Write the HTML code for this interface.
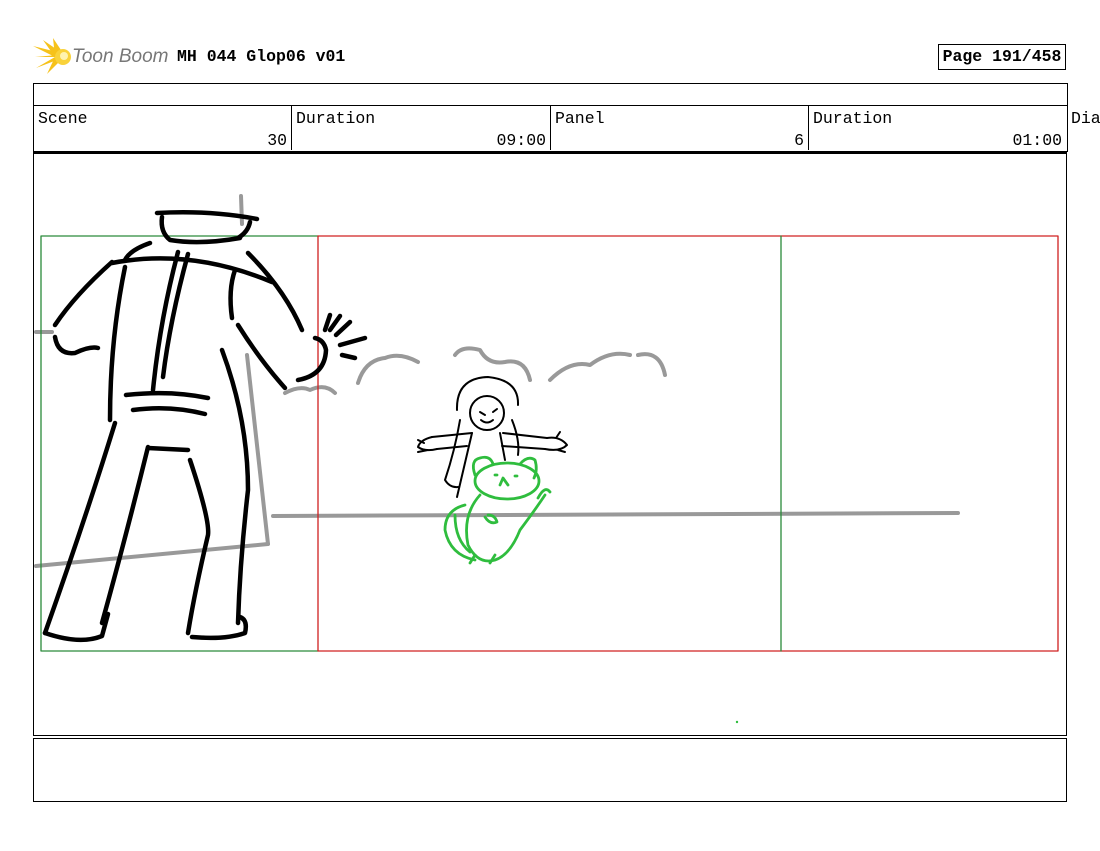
<!DOCTYPE html>
<html><head><meta charset="utf-8"><style>
body{margin:0;background:#fff;width:1100px;height:851px;overflow:hidden;position:relative;font-family:"Liberation Mono",monospace;}
.a{position:absolute;}
.t{font-size:16.5px;color:#000;line-height:18px;}
</style></head><body>
<svg class="a" style="left:33px;top:38px" width="40" height="38" viewBox="0 0 40 38">
<g fill="#f6c21a">
<polygon points="22,19 0,8 24,14"/><polygon points="22,19 2,19 24,17"/><polygon points="22,19 3,30 24,22"/>
<polygon points="22,19 10,2 26,13"/><polygon points="22,19 14,36 26,24"/><polygon points="22,19 20,0 28,12"/>
</g><circle cx="30" cy="19" r="8" fill="#f9d23a"/><circle cx="31" cy="18" r="4" fill="#fff3b0"/>
</svg>
<div class="a" style="left:72px;top:46px;font-family:'Liberation Sans',sans-serif;font-style:italic;font-size:19px;color:#777;">Toon Boom</div>
<div class="a t" style="left:177px;top:48px;font-weight:bold;">MH 044 Glop06 v01</div>
<div class="a t" style="left:938px;top:44px;width:126px;height:24px;border:1px solid #000;font-weight:bold;line-height:24px;text-align:center;">Page 191/458</div>

<div class="a" style="left:33px;top:83px;width:1033px;height:67px;border:1px solid #000;"></div>
<div class="a" style="left:33px;top:105px;width:1034px;border-top:1px solid #000;"></div>
<div class="a" style="left:291px;top:105px;height:45px;border-left:1px solid #000;"></div>
<div class="a" style="left:550px;top:105px;height:45px;border-left:1px solid #000;"></div>
<div class="a" style="left:808px;top:105px;height:45px;border-left:1px solid #000;"></div>
<div class="a t" style="left:38px;top:110px;">Scene</div>
<div class="a t" style="left:296px;top:110px;">Duration</div>
<div class="a t" style="left:555px;top:110px;">Panel</div>
<div class="a t" style="left:813px;top:110px;">Duration</div>
<div class="a t" style="left:1071px;top:110px;">Dia</div>
<div class="a t" style="left:200px;top:132px;width:87px;text-align:right;">30</div>
<div class="a t" style="left:400px;top:132px;width:146px;text-align:right;">09:00</div>
<div class="a t" style="left:700px;top:132px;width:104px;text-align:right;">6</div>
<div class="a t" style="left:900px;top:132px;width:162px;text-align:right;">01:00</div>

<div class="a" style="left:33px;top:152px;width:1032px;height:581px;border:1px solid #000;border-top-width:2px;"></div>
<div class="a" style="left:33px;top:738px;width:1032px;height:62px;border:1px solid #000;"></div>

<svg class="a" style="left:0;top:0" width="1100" height="851" viewBox="0 0 1100 851" fill="none" stroke-linecap="round" stroke-linejoin="round">
<g stroke="#999" stroke-width="4">
<path d="M36 332 L52 332"/><path d="M36 566 L268 544"/><path d="M247 355 L268 544"/><path d="M241 196 L242 224"/>
<path d="M273 516 L958 513"/>
<path d="M358 383 Q365 360 385 358 Q400 352 418 362"/><path d="M455 355 Q462 345 480 350 Q488 365 505 362 Q525 358 530 380"/>
<path d="M550 380 Q570 360 590 365 Q610 350 630 355"/><path d="M638 355 Q660 350 665 375"/>
<path d="M285 393 Q300 385 310 390 Q325 383 335 393"/>
</g>
<g stroke-width="1.3">
<path d="M41 236 H318 M41 236 V651 H318" stroke="#2a8a3a"/>
<path d="M318 236 H1058 V651 H318 Z" stroke="#d02020"/>
<path d="M781 236 V651" stroke="#2a8a3a"/>
</g>
<g stroke="#000" stroke-width="4.5">
<path d="M157 213 Q210 210 257 219"/><path d="M162 217 Q160 232 170 240 Q200 245 240 238"/><path d="M238 238 Q248 232 250 222"/>
<path d="M112 263 Q190 248 272 282"/>
<path d="M112 262 Q75 295 55 325"/><path d="M55 337 Q58 355 75 353 Q90 346 98 348"/>
<path d="M125 267 Q110 340 110 420"/><path d="M150 243 Q130 250 125 260"/>
<path d="M178 252 Q160 320 153 390"/><path d="M188 254 Q170 320 163 377"/>
<path d="M235 270 Q228 290 232 318"/><path d="M248 253 Q285 290 302 330"/>
<path d="M238 325 Q260 360 285 388"/>
<path d="M298 380 Q325 375 326 350 Q324 340 315 338"/>
<path d="M325 330 L330 315 M330 330 L340 316 M336 335 L350 322 M340 345 L365 338 M342 355 L355 358"/>
<path d="M126 395 Q170 390 208 398"/><path d="M133 410 Q170 405 205 414"/>
<path d="M115 423 Q85 520 45 633"/><path d="M45 633 Q80 645 102 636 L108 614"/>
<path d="M148 447 Q125 540 102 623"/><path d="M148 448 L188 450"/>
<path d="M190 460 Q210 520 208 535 Q195 590 188 633"/>
<path d="M222 350 Q248 420 248 490 Q240 560 238 623"/><path d="M192 637 Q225 640 245 633 Q248 620 240 617"/>
</g>
<g stroke="#000" stroke-width="2">
<circle cx="487" cy="413" r="17"/>
<path d="M457 410 Q456 378 488 377 Q519 380 518 405"/>
<path d="M460 420 Q455 450 445 480 Q450 488 458 487"/><path d="M512 420 Q520 440 518 455"/>
<path d="M432 437 L472 433 M437 449 L467 446 M503 433 L547 438 M502 446 L545 449"/>
<path d="M472 433 L457 497 M500 433 L505 460"/>
<path d="M432 437 Q420 440 418 447 Q425 452 437 449 M418 440 L424 443 M418 452 L428 450"/>
<path d="M547 438 Q560 436 567 445 Q560 452 545 449 M560 432 L556 438 M565 452 L558 450"/>
<path d="M480 412 L485 415 M493 412 L497 409 M481 420 Q487 425 493 420"/>
</g>
<g stroke="#2fbd3e" stroke-width="2.8">
<ellipse cx="507" cy="481" rx="32" ry="18"/>
<path d="M475 475 Q470 460 480 458 Q490 455 493 464"/><path d="M520 464 Q528 455 535 460 Q538 470 534 478"/>
<path d="M480 495 Q462 515 468 545 Q478 565 495 560 Q510 555 520 530 Q535 510 545 495"/>
<path d="M538 498 Q545 485 550 492"/>
<path d="M465 505 Q445 510 445 530 Q450 555 475 560"/><path d="M455 515 Q455 540 470 552"/>
<path d="M485 517 Q490 525 497 522 Q495 515 488 515"/>
<path d="M470 563 L475 555 M490 563 L495 555"/>
<path d="M500 485 L503 478 L508 485 M495 475 L497 475 M515 476 L517 476"/>
</g>
<circle cx="737" cy="722" r="1.2" fill="#2fbd3e"/>
</svg>
</body></html>
